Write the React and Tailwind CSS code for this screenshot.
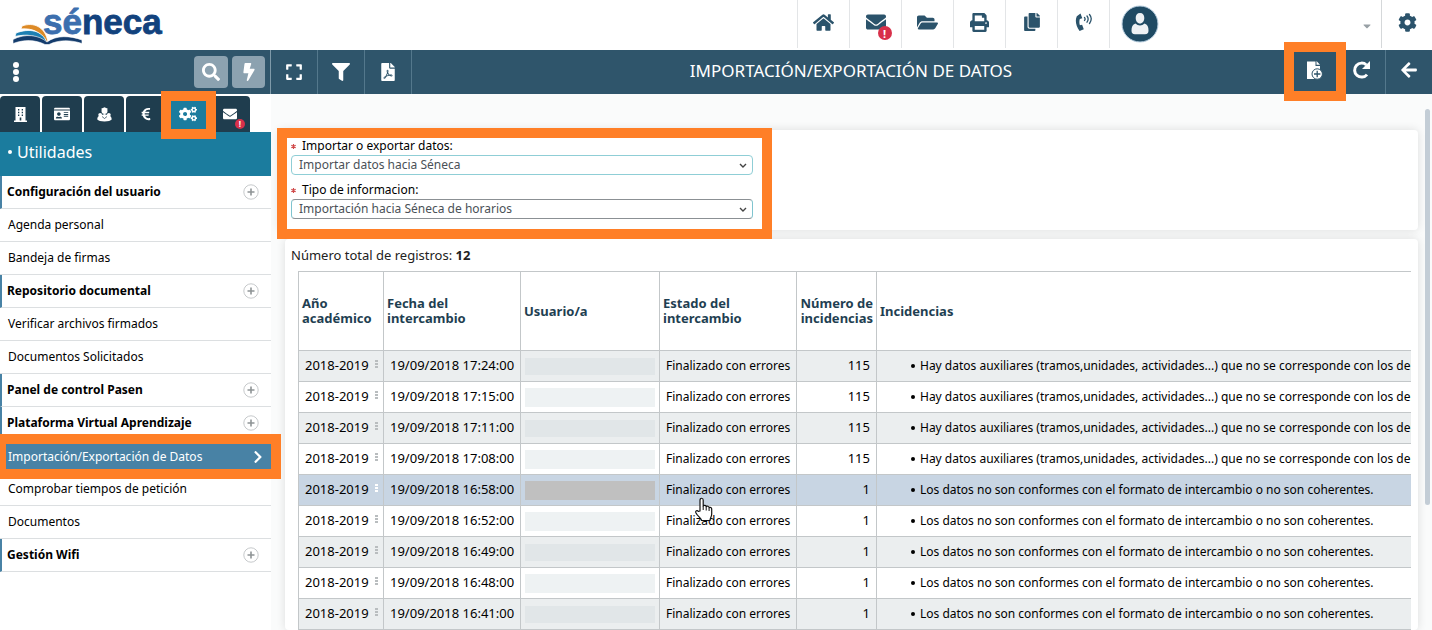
import React from "react";
import {
  FaHome, FaEnvelope, FaFolderOpen, FaPrint, FaCopy, FaCog, FaSearch, FaBolt, FaFilter, FaFilePdf,
  FaArrowLeft, FaIdCard, FaEuroSign, FaCogs, FaChevronRight, FaCaretDown, FaExpand,
} from "react-icons/fa";

const MENU = [
  { t: "Configuración del usuario", g: true },
  { t: "Agenda personal" },
  { t: "Bandeja de firmas" },
  { t: "Repositorio documental", g: true },
  { t: "Verificar archivos firmados" },
  { t: "Documentos Solicitados" },
  { t: "Panel de control Pasen", g: true },
  { t: "Plataforma Virtual Aprendizaje", g: true },
  { t: "Importación/Exportación de Datos", active: true },
  { t: "Comprobar tiempos de petición" },
  { t: "Documentos" },
  { t: "Gestión Wifi", g: true },
];

const AUX = "Hay datos auxiliares (tramos,unidades, actividades...) que no se corresponde con los del";
const FMT = "Los datos no son conformes con el formato de intercambio o no son coherentes.";
const ROWS = [
  ["17:24:00", 115, AUX],
  ["17:15:00", 115, AUX],
  ["17:11:00", 115, AUX],
  ["17:08:00", 115, AUX],
  ["16:58:00", 1, FMT],
  ["16:52:00", 1, FMT],
  ["16:49:00", 1, FMT],
  ["16:48:00", 1, FMT],
  ["16:41:00", 1, FMT],
];

function Logo() {
  return (
    <div className="flex items-start pl-3">
      <svg width="160" height="46" viewBox="0 0 160 46" role="img" aria-label="séneca">
        <text x="31" y="34" fontFamily="Liberation Sans, sans-serif" fontWeight="bold" fontSize="35" fill="#12427d" stroke="#12427d" strokeWidth=".8">
          <tspan fill="#3c6fae" stroke="#3c6fae">sé</tspan>neca
        </text>
        <path d="M10 26c11-4 23 0 26 16l-2 .5C29 32 21 28 9 29z" fill="#dd8a26" stroke="#fff" strokeWidth=".8" />
        <path d="M4 33c13-5 26-3 31 9.500l-2.500.5C25 34.500 14 34 3 36.500z" fill="#1d7fb3" stroke="#fff" strokeWidth=".8" />
        <path d="M1 39.500c12-6.500 26-4.500 34 2.500 9-7 23-6.500 35-2v3.500c-12-4-24-3.500-33 1h-4C23 39.500 12 39.500 1 43.500z" fill="#143c6c" stroke="#fff" strokeWidth=".6" />
      </svg>
    </div>
  );
}

function Alert({ small }) {
  return (
    <span className={small
      ? "absolute -right-2 -bottom-2 flex size-2.5 items-center justify-center rounded-full bg-[#d8304a] text-[8px] leading-none font-bold text-white"
      : "absolute -right-1.5 -bottom-2 flex size-3.5 items-center justify-center rounded-full bg-[#d8304a] text-[11px] leading-none font-bold text-white"}>!</span>
  );
}

function Phone() {
  return (
    <svg width="18" height="20" viewBox="0 0 18 20" fill="none" aria-hidden="true">
      <path d="M5.500 1.500 1.800 4.200C-.2 8.500 1 14.500 4.600 19l4.200-1.800-1.700-4.400-2.200.5C4.200 11.200 4.200 9 4.800 7.100l2.500-.8z" fill="#2b536b" />
      <path d="M9.500 5.500q1.200 1.300 0 3M12 4q2.300 2.800 0 6.200M14.500 2.500q3.500 4.200 0 9" stroke="#2b536b" strokeWidth="1.300" strokeLinecap="round" />
    </svg>
  );
}

function Building() {
  return (
    <svg width="13" height="15" viewBox="0 0 13 15" aria-hidden="true">
      <path fillRule="evenodd" fill="#fff" d="M1.500 0h10v13.500H13V15H0v-1.500h1.500zM4 2v1.500h1.300V2zm3.700 0v1.500H9V2zM4 4.800v1.500h1.300V4.800zm3.700 0v1.500H9V4.800zM4 7.600v1.500h1.300V7.600zm3.700 0v1.500H9V7.600zM5.700 10.500v3h1.600v-3z" />
    </svg>
  );
}

function People() {
  return (
    <svg width="15" height="15" viewBox="0 0 15 15" fill="#fff" aria-hidden="true">
      <circle cx="7.500" cy="4" r="3" />
      <path d="M3.800 2 7.500.3 11.200 2l-3.700 1.500z" />
      <circle cx="3.200" cy="7.800" r="1.900" />
      <circle cx="11.800" cy="7.800" r="1.900" />
      <path d="M.3 12.500c0-3.200 2-4.200 4.500-4.500L7.500 7l2.700 1c2.500.3 4.500 1.300 4.500 4.500-1 1.300-3.700 2-7.200 2s-6.200-.7-7.200-2z" />
      <path d="M5 9.500 7.500 11.500 10 9.500" fill="none" stroke="#1f3d4e" strokeWidth=".7" />
    </svg>
  );
}

function Redo() {
  return (
    <svg width="19" height="20" viewBox="0 0 19 20" aria-hidden="true">
      <path d="M15 14.600A7 7 0 1 1 14.400 5" fill="none" stroke="#fff" strokeWidth="3" />
      <path d="M18 1v8h-8z" fill="#fff" />
    </svg>
  );
}

function AddFile() {
  return (
    <svg width="17" height="19" viewBox="0 0 17 19" aria-hidden="true">
      <path d="M1 .5h8.500V5H14v13H1z" fill="#fff" />
      <path d="M10.500 0 14 3.800h-3.500z" fill="#fff" />
      <circle cx="11.200" cy="13" r="5.200" fill="#fff" stroke="#2f556b" strokeWidth="1" />
      <path d="M11.200 9.800v6.400M8 13h6.400" stroke="#2f556b" strokeWidth="1.300" />
    </svg>
  );
}

const headCell = "flex w-[52px] items-center justify-center border-l border-[#e3e5e7] pb-1 text-[#2b536b]";
const toolCell = "flex w-[47px] items-center justify-center border-r border-[#54788c] text-white";
const tab = "flex h-9 w-10 items-center justify-center rounded-t bg-[#1f3d4e] text-white";

function TopBar() {
  return (
    <header className="flex h-[50px] bg-white">
      <Logo />
      <nav className="ml-auto flex h-12" aria-label="Accesos">
        <button className={headCell} aria-label="Inicio"><FaHome size={21} /></button>
        <button className={headCell} aria-label="Mensajes">
          <span className="relative"><FaEnvelope size={20} /><Alert /></span>
        </button>
        <button className={headCell} aria-label="Carpetas"><FaFolderOpen size={21} /></button>
        <button className={headCell} aria-label="Imprimir"><FaPrint size={19} /></button>
        <button className={headCell} aria-label="Copias"><FaCopy size={18} /></button>
        <button className={headCell} aria-label="Teléfono"><Phone /></button>
        <button className="flex w-[272px] items-center justify-between border-l border-[#e3e5e7] pr-2 pl-[11px]" aria-label="Usuario">
          <svg width="38" height="38" viewBox="0 0 38 38" aria-hidden="true">
            <circle cx="19" cy="19" r="18" fill="#1f4a63" stroke="#b9cfe0" />
            <path d="M19 8c3 0 4.300 2 4.300 5s-1.800 5.500-4.300 5.500-4.300-2.500-4.300-5.500S16 8 19 8zM14.500 18.500c2.500 2.500 6.500 2.500 9 0 3 .8 4 3.500 4 7 0 2.500-1 3.700-3.500 3.700H14c-2.500 0-3.500-1.200-3.500-3.700 0-3.500 1-6.200 4-7z" fill="#edf1f4" />
          </svg>
          <FaCaretDown size={12} color="#98a0a5" className="mt-1" />
        </button>
        <button className="flex w-[51px] items-center justify-center border-l border-[#d5d8da] pb-1 text-[#2b536b]" aria-label="Ajustes"><FaCog size={19} /></button>
      </nav>
    </header>
  );
}

function ToolBar() {
  return (
    <div className="flex h-11 bg-[#2f556b]">
      <div className="flex w-[271px] shrink-0 items-center justify-between border-r border-[#7f9aa9] pr-[5px] pl-[13px]">
        <button className="flex flex-col gap-px" aria-label="Menú">
          <span className="size-1.5 rounded-full bg-white" />
          <span className="size-1.5 rounded-full bg-white" />
          <span className="size-1.5 rounded-full bg-white" />
        </button>
        <div className="flex gap-1">
          <button className="flex h-8 w-[34px] items-center justify-center rounded bg-[#8ca2b0] text-white" aria-label="Buscar"><FaSearch size={18} /></button>
          <button className="flex h-8 w-[33px] items-center justify-center rounded bg-[#8ca2b0] text-white" aria-label="Acceso rápido"><FaBolt size={18} /></button>
        </div>
      </div>
      <button className={toolCell} aria-label="Pantalla completa"><FaExpand size={18} /></button>
      <button className={toolCell} aria-label="Filtrar"><FaFilter size={18} /></button>
      <button className={toolCell} aria-label="Exportar PDF"><FaFilePdf size={18} /></button>
      <h1 className="flex flex-1 items-center justify-center pb-0.5 text-[17px] text-white">IMPORTACIÓN/EXPORTACIÓN DE DATOS</h1>
      <button className="relative flex w-12 items-center justify-center pb-1" aria-label="Añadir archivo">
        <AddFile />
        <span className="pointer-events-none absolute -top-2 -left-1.5 z-10 h-[59px] w-[62px] border-[10px] border-[#ff7f27]" />
      </button>
      <button className="flex w-12 items-center justify-center border-r border-[#54788c] pb-1" aria-label="Actualizar"><Redo /></button>
      <button className="flex w-[46px] items-center justify-center pb-1 text-white" aria-label="Volver"><FaArrowLeft size={18} /></button>
    </div>
  );
}

function SideBar() {
  return (
    <aside className="w-[271px] shrink-0 bg-white">
      <div className="flex gap-0.5 pt-0.5">
        <button className={tab} aria-label="Centro"><Building /></button>
        <button className={tab} aria-label="Personal"><FaIdCard size={16} /></button>
        <button className={tab} aria-label="Alumnado"><People /></button>
        <button className={tab} aria-label="Economía"><FaEuroSign size={14} /></button>
        <button className="relative flex h-9 w-10 items-center justify-center rounded-t bg-[#1b7c9e] text-white" aria-label="Utilidades">
          <FaCogs size={18} />
          <span className="pointer-events-none absolute -top-[5px] -left-[7px] z-10 h-12 w-[55px] border-[10px] border-[#ff7f27]" />
        </button>
        <button className={tab} aria-label="Mensajes"><span className="relative"><FaEnvelope size={14} /><Alert small /></span></button>
      </div>
      <h2 className="flex h-11 items-center gap-[5px] bg-[#1b7c9e] pb-1 pl-2 text-base text-white">
        <span className="size-1 rounded-full bg-white" />Utilidades
      </h2>
      <ul>
        {MENU.map((m) => (
          <li key={m.t} className="relative">
            <a
              href="#"
              className={
                m.active
                  ? "flex h-[33px] items-center justify-between bg-[#4882a5] pr-1.5 pl-2 text-xs text-white"
                  : m.g
                  ? "flex h-[33px] items-center justify-between border-b border-l-2 border-b-[#dcdfe1] border-l-[#4882a5] pr-3 pl-[5px] text-xs font-bold text-black"
                  : "flex h-[33px] items-center border-b border-[#dcdfe1] pl-2 text-xs text-black"
              }
            >
              {m.t}
              {m.g && (
                <svg width="16" height="16" viewBox="0 0 16 16" aria-hidden="true">
                  <circle cx="8" cy="8" r="7.200" fill="#fff" stroke="#c6c9cb" />
                  <path d="M8 4.500v7M4.500 8h7" stroke="#8f9496" strokeWidth="1.600" />
                </svg>
              )}
              {m.active && <FaChevronRight size={14} />}
            </a>
            {m.active && <span className="pointer-events-none absolute -top-1.5 -left-1 z-10 h-[45px] w-[285px] border-[10px] border-[#ff7f27]" />}
          </li>
        ))}
      </ul>
    </aside>
  );
}

function Field({ id, label, value, strong }) {
  return (
    <div className="w-[462px]">
      <label htmlFor={id} className="flex h-4 items-center gap-1.5 text-xs text-black">
        <svg width="5" height="5" viewBox="0 0 6 6" aria-hidden="true">
          <path d="M3 0v6M.4 1.500l5.200 3M5.600 1.500l-5.200 3" stroke="#d04a4a" strokeWidth="1.400" />
        </svg>
        {label}
      </label>
      <div className="relative mt-px">
        <select
          id={id}
          className={strong
            ? "block h-5 w-full appearance-none rounded-sm border border-x-[#7fc4cf] border-y-[#8b9094] bg-white px-[7px] text-xs text-[#4a5157]"
            : "block h-5 w-full appearance-none rounded-sm border border-[#8fced6] bg-white px-[7px] text-xs text-[#4a5157]"}
        >
          <option>{value}</option>
        </select>
        <svg className="pointer-events-none absolute top-2 right-1.5" width="8" height="6" viewBox="0 0 8 6" aria-hidden="true">
          <path d="M1 1l3 3 3-3" fill="none" stroke="#444" strokeWidth="1.400" />
        </svg>
      </div>
    </div>
  );
}

function Pointer() {
  return (
    <svg className="pointer-events-none absolute top-[22px] left-[33px] z-10" width="22" height="26" viewBox="0 0 22 26" aria-hidden="true">
      <path d="M7 14V3.200C7 .6 10.200.6 10.200 3.200V9c.8-1 2.800-.8 3 .7.900-.9 2.700-.5 2.900.9 1-.7 2.600-.1 2.600 1.400v5c0 3-1.700 4-1.700 6.500H8.500c0-2.500-3.500-3.500-5.500-7.500-1-2.200 1.200-3 2.300-1.700z" fill="#fff" stroke="#111" strokeWidth="1.200" strokeLinejoin="round" />
      <path d="M10.200 9v4M13.200 10v3.500M16.100 11v3" stroke="#111" />
    </svg>
  );
}

const th = "border border-[#c3c7c9] px-[3px] leading-[15px]";

export default function App() {
  return (
    <div className="flex h-screen flex-col overflow-hidden bg-white font-['Noto_Sans','Open_Sans',sans-serif]">
      <TopBar />
      <ToolBar />
      <div className="flex min-h-0 flex-1">
        <SideBar />
        <main className="flex min-w-0 flex-1 bg-[#fafbfb]">
          <div className="min-w-0 flex-1 pt-9">
            <section className="relative ml-2 flex h-[100px] flex-col gap-[7px] rounded bg-white pt-2 pl-3 shadow-[0_0_10px_rgba(0,0,0,0.12)]">
              <Field id="op" label="Importar o exportar datos:" value="Importar datos hacia Séneca" />
              <Field id="tipo" label="Tipo de informacion:" value="Importación hacia Séneca de horarios" strong />
              <span className="pointer-events-none absolute -top-0.5 -left-0.5 z-10 h-[111px] w-[495px] border-[10px] border-[#ff7f27]" />
            </section>
            <section className="mt-[9px] ml-3.5 rounded bg-white pt-[7px] shadow-[0_0_10px_rgba(0,0,0,0.12)]">
              <p className="pl-1.5 text-[13px] leading-[18px] text-[#222]">Número total de registros: <b>12</b></p>
              <div className="mt-[7px] mr-[7px] ml-[13px] overflow-hidden">
                <table className="w-full table-fixed border-collapse border-r-0 text-[13px] text-black">
                  <colgroup>
                    <col className="w-[85px]" /><col className="w-[137px]" /><col className="w-[139px]" />
                    <col className="w-[137px]" /><col className="w-[80px]" /><col />
                  </colgroup>
                  <thead>
                    <tr className="h-[79px] text-left text-[13px] text-[#1f3f52]">
                      <th className={th}>Año académico</th>
                      <th className={th}>Fecha del intercambio</th>
                      <th className={th}>Usuario/a</th>
                      <th className="border border-[#c3c7c9] pr-8 pl-[3px] leading-[15px]">Estado del intercambio</th>
                      <th className="border border-[#c3c7c9] px-[3px] text-right leading-[15px]">Número de incidencias</th>
                      <th className="border border-r-0 border-[#c3c7c9] px-[3px] leading-[15px]">Incidencias</th>
                    </tr>
                  </thead>
                  <tbody>
                    {ROWS.map(([time, n, msg], i) => (
                      <tr key={time} className={i === 4 ? "h-[31px] bg-[#c8d5e3]" : i % 2 ? "h-[31px] bg-white" : "h-[31px] bg-[#ebeeef]"}>
                        <td className="border border-[#c3c7c9] p-0 pl-1.5">
                          <span className="flex items-center justify-between pr-[5px]">2018-2019
                            <span className="mb-1 flex flex-col gap-px">
                              <span className={i === 4 ? "h-0.5 w-[3px] bg-white" : "h-0.5 w-[3px] bg-[#b9bdbf]"} />
                              <span className={i === 4 ? "h-0.5 w-[3px] bg-white" : "h-0.5 w-[3px] bg-[#b9bdbf]"} />
                              <span className={i === 4 ? "h-0.5 w-[3px] bg-white" : "h-0.5 w-[3px] bg-[#b9bdbf]"} />
                            </span>
                          </span>
                        </td>
                        <td className="border border-[#c3c7c9] p-0 pl-1.5 whitespace-nowrap">19/09/2018 {time}</td>
                        <td className="border border-[#c3c7c9] px-1 py-0">
                          <div className={i === 4 ? "h-[19px] bg-[#c0c0c0]" : i % 2 ? "h-[19px] bg-[#eef2f3]" : "h-[17px] bg-[#e1e6e8]"} />
                        </td>
                        <td className="relative border border-[#c3c7c9] p-0 pl-1.5 text-xs whitespace-nowrap">
                          Finalizado con errores
                          {i === 4 && <Pointer />}
                        </td>
                        <td className="border border-[#c3c7c9] p-0 pr-1.5 text-right">{n}</td>
                        <td className="border border-r-0 border-[#c3c7c9] p-0 pl-[34px] text-xs">
                          <div className="flex items-center gap-[5px] whitespace-nowrap">
                            <span className="size-1 shrink-0 rounded-full bg-black" />{msg}
                          </div>
                        </td>
                      </tr>
                    ))}
                  </tbody>
                </table>
              </div>
            </section>
          </div>
          <div className="flex w-3.5 shrink-0 justify-end pt-[15px] pr-0.5" aria-hidden="true">
            <div className="h-[396px] w-[5px] rounded-sm bg-[#c3cdd6]" />
          </div>
        </main>
      </div>
    </div>
  );
}
